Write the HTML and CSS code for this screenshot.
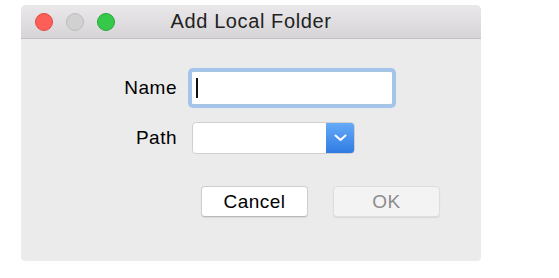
FILE: index.html
```html
<!DOCTYPE html>
<html lang="en">
  <head>
    <meta charset="UTF-8" />
    <title>Add Local Folder</title>
    <link rel="stylesheet" href="styles.css">
  </head>
  <body>
    <div class="window">
      <div class="titlebar">
        <div class="lights">
          <span class="light close"></span>
          <span class="light mini"></span>
          <span class="light zoom"></span>
        </div>
        <div class="title">Add Local Folder</div>
      </div>

      <div class="form">
        <label class="label" for="name">Name</label>
        <div class="input focused" id="name"><span class="caret"></span></div>

        <label class="label">Path</label>
        <div class="popup">
          <span class="popup-value"></span>
          <span class="popup-btn">
            <svg width="13" height="8" viewBox="0 0 13 8">
              <path d="M1.5 1.5 L6.5 6 L11.5 1.5" fill="none" stroke="#fff" stroke-width="2" stroke-linecap="round" stroke-linejoin="round" />
            </svg>
          </span>
        </div>
      </div>

      <div class="actions">
        <button class="btn">Cancel</button>
        <button class="btn disabled">OK</button>
      </div>
    </div>
  </body>
</html>
```

FILE: styles.css
```css
body {
  margin: 0;
  padding: 5px 0 0 21px;
  background: #ffffff;
  font-family: "Liberation Sans", Arial, sans-serif;
  color: #1a1a1a;
}
.window {
  width: 460px;
  height: 256px;
  background: #ecebec;
  border-radius: 5px 5px 4px 4px;
  overflow: hidden;
}
.titlebar {
  height: 33px;
  display: grid;
  grid-template-columns: 1fr auto 1fr;
  align-items: center;
  background: linear-gradient(#eae8ea, #d6d4d6);
  border-bottom: 1px solid #c4c2c4;
}
.lights {
  display: flex;
  gap: 13px;
  padding-left: 14px;
}
.light {
  width: 18px;
  height: 18px;
  border-radius: 50%;
  box-sizing: border-box;
}
.close {
  background: #fc5f58;
  border: 1px solid #e4483f;
}
.mini {
  background: #d2d1d2;
  border: 1px solid #bebdbe;
}
.zoom {
  background: #35c84a;
  border: 1px solid #27a93a;
}
.title {
  font-size: 20px;
  letter-spacing: 0.6px;
  color: #222;
}
.form {
  display: grid;
  grid-template-columns: 156px auto;
  column-gap: 14px;
  row-gap: 17px;
  align-items: center;
  padding-top: 32px;
}
.label {
  text-align: right;
  font-size: 19px;
  letter-spacing: 0.5px;
  color: #000;
}
.input {
  width: 202px;
  height: 34px;
  box-sizing: border-box;
  background: #fff;
  border: 1px solid #a9c3e2;
  border-radius: 2px;
  display: flex;
  align-items: center;
  padding-left: 4px;
}
.input.focused {
  box-shadow: 0 0 0 3px #a3c5ec;
}
.caret {
  width: 2px;
  height: 20px;
  background: #111;
}
.popup {
  margin-left: 1px;
  width: 163px;
  height: 32px;
  display: flex;
  box-sizing: border-box;
  border: 1px solid #d0cfd0;
  border-radius: 4px;
  background: #fff;
  overflow: hidden;
}
.popup-value {
  flex: 1;
}
.popup-btn {
  width: 28px;
  display: flex;
  align-items: center;
  justify-content: center;
  background: linear-gradient(#66aaf7, #2f7be3);
}
.actions {
  display: flex;
  gap: 25px;
  padding: 32px 0 0 180px;
}
.btn {
  width: 107px;
  height: 31px;
  font-family: inherit;
  font-size: 19px;
  letter-spacing: 0.5px;
  color: #000;
  background: #fff;
  border: 1px solid #cfcecf;
  border-bottom-color: #b9b8b9;
  border-radius: 4px;
  box-shadow: 0 1px 1px rgba(0, 0, 0, 0.08);
}
.btn.disabled {
  background: #f4f3f4;
  color: #8c8c8c;
  border-color: #dedddf;
}
```
